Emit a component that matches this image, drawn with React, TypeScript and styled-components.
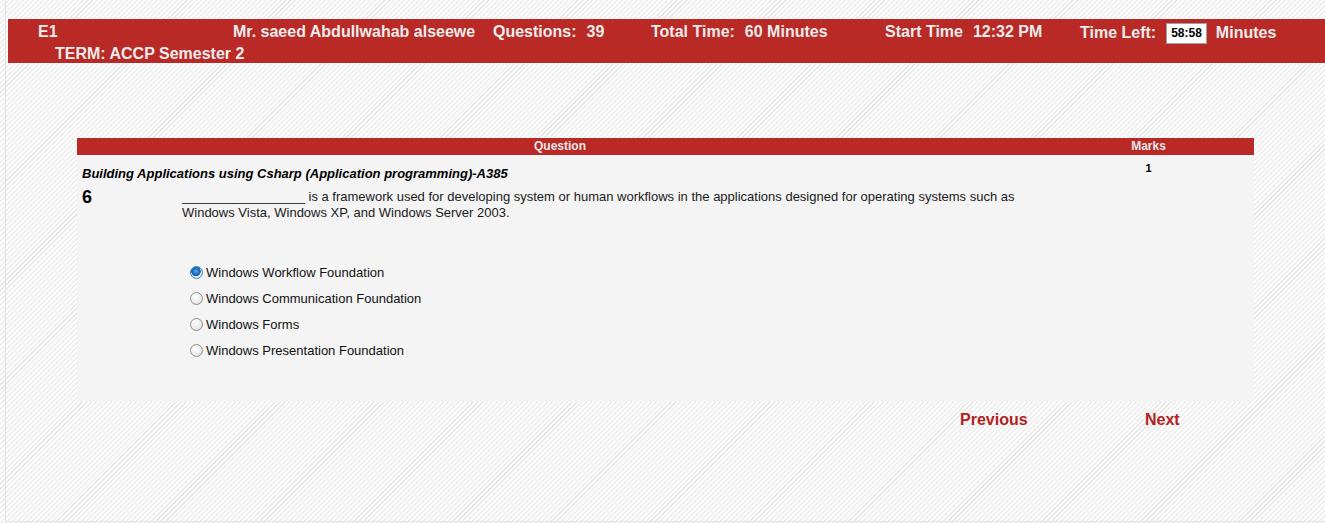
import styled, { createGlobalStyle } from "styled-components";

const GlobalStyle = createGlobalStyle`
  html, body {
    margin: 0;
    padding: 0;
  }
  body {
    font-family: "Liberation Sans", Arial, sans-serif;
    background: repeating-linear-gradient(135deg, #ffffff 0 2px, #ebebeb 2px 3.5px);
    min-height: 523px;
    overflow: hidden;
  }
`;

const options = [
  "Windows Workflow Foundation",
  "Windows Communication Foundation",
  "Windows Forms",
  "Windows Presentation Foundation",
];

function App() {
  return (
    <>
      <GlobalStyle />
      <Frame>
        <Header>
          <TopRow>
            <Cell $w={195}>E1</Cell>
            <Cell $w={260}>Mr. saeed Abdullwahab alseewe</Cell>
            <Cell $w={158}>
              Questions:<Value>39</Value>
            </Cell>
            <Cell $w={234}>
              Total Time:<Value>60 Minutes</Value>
            </Cell>
            <Cell $w={195}>
              Start Time<Value>12:32 PM</Value>
            </Cell>
            <Cell $drop>
              Time Left:<Clock>58:58</Clock>Minutes
            </Cell>
          </TopRow>
          <TermRow>TERM: ACCP Semester 2</TermRow>
        </Header>

        <Table>
          <HeadRow>
            <span>Question</span>
            <span>Marks</span>
          </HeadRow>
          <Body>
            <Main>
              <Subject>Building Applications using Csharp (Application programming)-A385</Subject>
              <QuestionRow>
                <Number>6</Number>
                <div>
                  <QuestionText>
                    _________________ is a framework used for developing system or human workflows in the
                    applications designed for operating systems such as Windows Vista, Windows XP, and Windows
                    Server 2003.
                  </QuestionText>
                  <Options>
                    {options.map((o, i) => (
                      <Option key={o}>
                        <Radio $checked={i === 0} />
                        {o}
                      </Option>
                    ))}
                  </Options>
                </div>
              </QuestionRow>
            </Main>
            <Marks>1</Marks>
          </Body>
          <Nav>
            <NavLink>Previous</NavLink>
            <NavLink>Next</NavLink>
          </Nav>
        </Table>
      </Frame>
    </>
  );
}

export default App;

const Frame = styled.div`
  margin-left: 5px;
  height: 522px;
  box-sizing: border-box;
  border-left: 1px solid #e2e2e2;
  border-bottom: 1px solid #e2e2e2;
  padding-top: 19px;
  overflow: hidden;
`;

const Header = styled.header`
  margin-left: 2px;
  height: 44px;
  background: #b92a26;
  color: #ececec;
  font-size: 16px;
  font-weight: bold;
  white-space: nowrap;
`;

const TopRow = styled.div`
  display: flex;
  align-items: center;
  height: 25px;
  padding-left: 30px;
`;

const Cell = styled.div<{ $w?: number; $drop?: boolean }>`
  flex: none;
  width: ${(p) => (p.$w ? `${p.$w}px` : "auto")};
  display: flex;
  align-items: center;
  padding-top: ${(p) => (p.$drop ? "3px" : "0")};
`;

const Value = styled.span`
  margin-left: 10px;
`;

const Clock = styled.span`
  background: #ffffff;
  color: #000000;
  font-size: 12px;
  line-height: 13px;
  padding: 3px 4px;
  border: 1px solid #a0a0a0;
  margin: 0 9px 0 10px;
`;

const TermRow = styled.div`
  height: 19px;
  line-height: 19px;
  padding-left: 47px;
`;

const Table = styled.div`
  margin: 75px 0 0 71px;
  width: 1177px;
`;

const HeadRow = styled.div`
  display: grid;
  grid-template-columns: 966px 211px;
  height: 17px;
  line-height: 17px;
  background: #b92a26;
  color: #e8e8e8;
  font-size: 12px;
  font-weight: bold;
  text-align: center;
`;

const Body = styled.div`
  display: grid;
  grid-template-columns: 966px 211px;
  height: 247px;
  background: #f4f4f4;
  color: #000000;
`;

const Main = styled.div`
  padding: 12px 0 0 5px;
`;

const Subject = styled.div`
  font-size: 13px;
  line-height: 14px;
  font-weight: bold;
  font-style: italic;
`;

const Marks = styled.div`
  padding-top: 7px;
  text-align: center;
  font-size: 11px;
  line-height: 12px;
  font-weight: bold;
`;

const QuestionRow = styled.div`
  display: grid;
  grid-template-columns: 100px 856px;
  margin-top: 8px;
`;

const Number = styled.div`
  font-size: 18px;
  line-height: 16px;
  font-weight: bold;
`;

const QuestionText = styled.div`
  font-size: 13px;
  line-height: 16px;
  color: #1a1a1a;
`;

const Options = styled.div`
  margin: 38px 0 0 8px;
`;

const Option = styled.div`
  display: flex;
  align-items: center;
  height: 26px;
  font-size: 13px;
  color: #111111;
`;

const Radio = styled.span<{ $checked?: boolean }>`
  box-sizing: border-box;
  width: 13px;
  height: 13px;
  margin-right: 3px;
  border-radius: 50%;
  border: 1px solid ${(p) => (p.$checked ? "#3c7fb1" : "#8f8f8f")};
  background: ${(p) =>
    p.$checked
      ? "radial-gradient(circle at 45% 40%, #5aa8e8 0, #1f6fc0 3px, #1a5ea8 4.5px, #dbeaf7 5px)"
      : "radial-gradient(circle at 40% 35%, #ffffff 0, #ececec 55%, #cdcdcd 100%)"};
`;

const Nav = styled.div`
  display: grid;
  grid-template-columns: 185px auto;
  padding: 9px 0 0 883px;
`;

const NavLink = styled.span`
  font-size: 16px;
  line-height: 18px;
  font-weight: bold;
  color: #b22222;
  cursor: pointer;
`;
